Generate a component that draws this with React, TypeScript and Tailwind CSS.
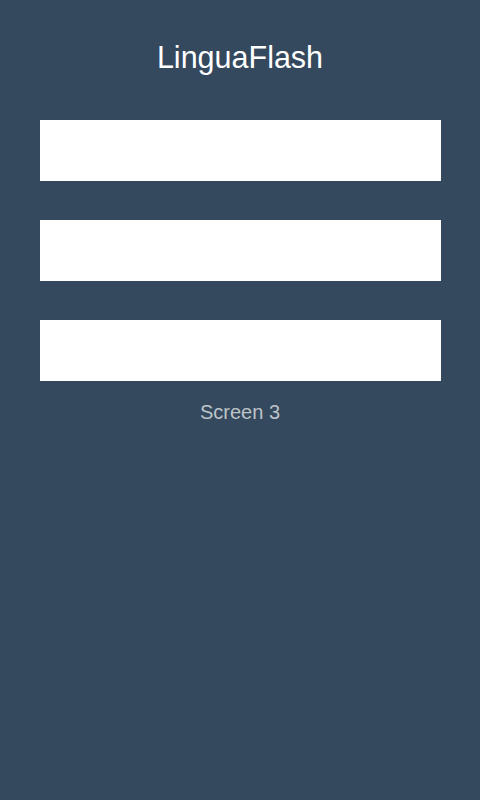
const App = () => {
  return (
    <div className="w-[480px] h-[800px] bg-[#34495e] flex flex-col items-center pt-[39px] font-['Liberation_Sans',Arial,sans-serif]">
      <h1 className="text-[30.5px] leading-[36px] text-white">LinguaFlash</h1>
      <div className="mt-[45px] flex flex-col gap-[39px]">
        <div className="w-[401px] h-[61px] bg-white" />
        <div className="w-[401px] h-[61px] bg-white" />
        <div className="w-[401px] h-[61px] bg-white" />
      </div>
      <p className="mt-[19px] text-[20px] leading-[24px] text-[#bdc3c7]">Screen 3</p>
    </div>
  );
};

export default App;
